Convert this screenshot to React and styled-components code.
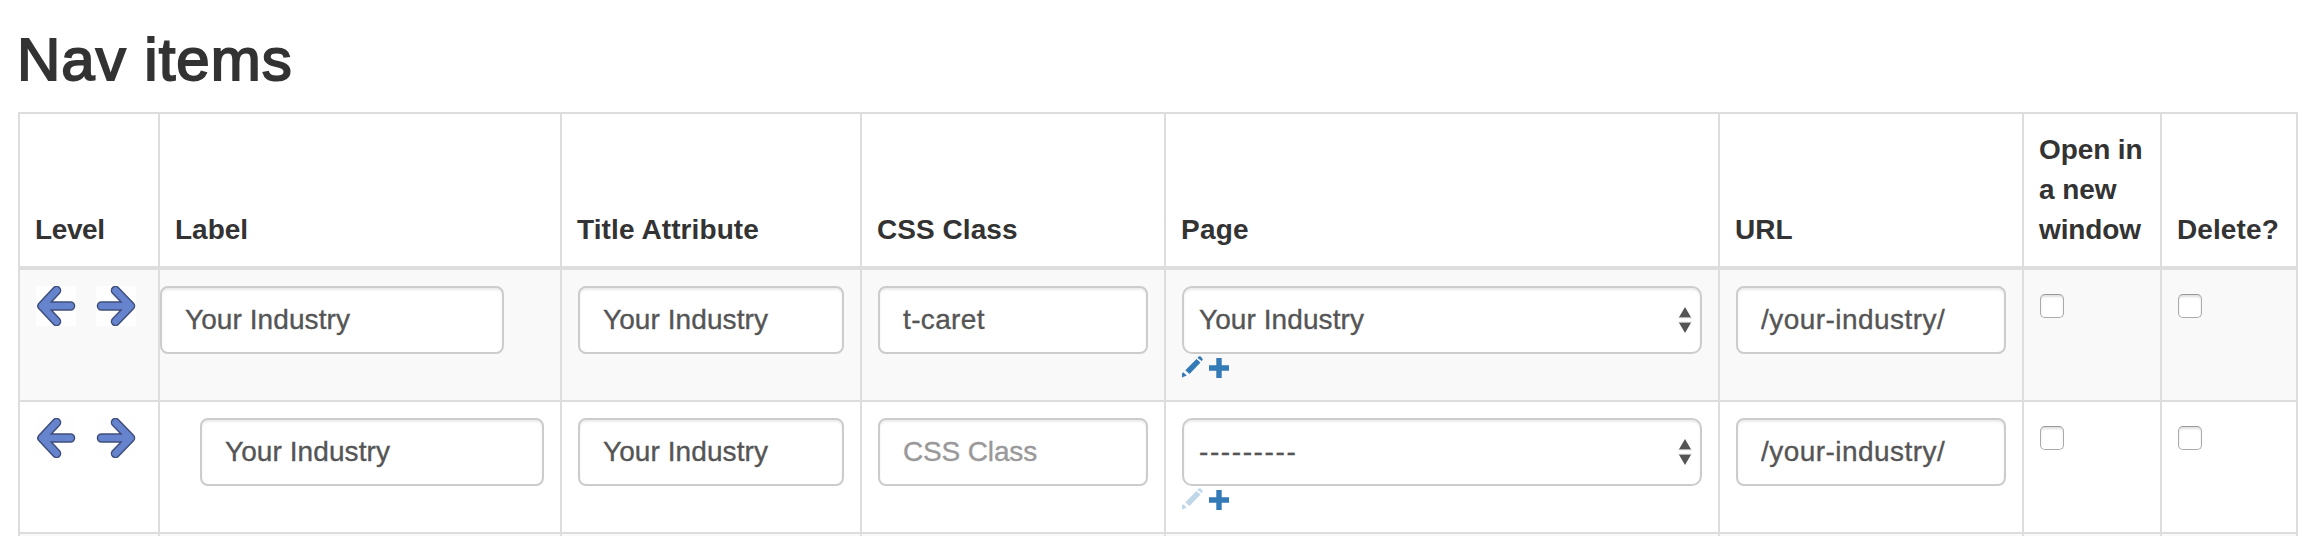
import React from "react";
import styled, { createGlobalStyle } from "styled-components";

const GlobalStyle = createGlobalStyle`
  * { box-sizing: border-box; }
  body {
    margin: 0;
    background: #fff;
    color: #333;
    font: 28px/40px "Liberation Sans", Arial, sans-serif;
    overflow: hidden;
  }
`;

const Page = styled.main`
  width: 2312px;
  height: 536px;
  padding: 27px 14px 0 18px;
  overflow: hidden;
`;

const Title = styled.h1`
  margin: 0 0 19px;
  font-size: 60px;
  line-height: 66px;
  font-weight: 400;
  letter-spacing: 1px;
  text-indent: -1px;
  -webkit-text-stroke: 1.9px #333;
`;

const Table = styled.table`
  width: 2280px;
  table-layout: fixed;
  border-collapse: separate;
  border-spacing: 0;
  border: solid #ddd;
  border-width: 2px 0 0 2px;
`;

const Col = styled.col`
  width: ${(p) => p.$w}px;
`;

const HeadCell = styled.th`
  padding: 16px 16px 16px 15px;
  border: solid #ddd;
  border-width: 0 2px 4px 0;
  text-align: left;
  vertical-align: bottom;
  font-weight: 700;
  white-space: nowrap;
  letter-spacing: ${(p) => p.$spacing || 0}px;
`;

const Row = styled.tr`
  background: ${(p) => (p.$striped ? "#f9f9f9" : "#fff")};
`;

const Cell = styled.td`
  height: 132px;
  padding: 16px;
  padding-left: ${(p) => p.$indent ?? 16}px;
  border: solid #ddd;
  border-width: 0 2px 2px 0;
  vertical-align: top;
`;

const TextInput = styled.input`
  display: block;
  width: ${(p) => p.$w}px;
  height: 68px;
  padding: 12px 23px;
  border: 2px solid #ccc;
  border-radius: 8px;
  background: #fff;
  box-shadow: inset 0 2px 2px rgba(0, 0, 0, 0.075);
  color: #555;
  font: inherit;
  letter-spacing: ${(p) => p.$spacing || 0}px;
  -webkit-text-stroke: 0.35px currentColor;
  outline: none;
  &::placeholder { color: #999; opacity: 1; }
`;

const SelectBox = styled.div`
  display: flex;
  align-items: center;
  justify-content: space-between;
  width: 520px;
  height: 68px;
  padding: 0 8px 0 15px;
  border: 2px solid #ccc;
  border-radius: 10px;
  background: #fff;
  box-shadow: inset 0 2px 2px rgba(0, 0, 0, 0.075);
  color: #555;
  -webkit-text-stroke: 0.35px currentColor;
`;

const SelectValue = styled.span`
  letter-spacing: ${(p) => p.$spacing || 0}px;
`;

const Arrows = styled.div`
  display: flex;
  gap: 20px;
  svg { display: block; background: #fefefe; }
`;

const Links = styled.div`
  display: flex;
  gap: 6px;
  padding-top: 2px;
  svg { display: block; }
`;

const Check = styled.input`
  appearance: none;
  display: block;
  width: 24px;
  height: 24px;
  margin: 8px 0 0;
  border: 1px solid #aaa;
  border-top-color: #999;
  border-radius: 5px;
  background: #fff;
  box-shadow: inset 0 2px 2px rgba(0, 0, 0, 0.12);
`;

function ArrowIcon({ right }) {
  const d = right
    ? "M5.5 20H32M19.5 4.5L34.5 20L19.5 35.5"
    : "M34.5 20H8M20.5 4.5L6 20L20.5 35.5";
  return (
    <svg width="40" height="40" viewBox="0 0 40 40" fill="none" strokeLinecap="round" strokeLinejoin="round">
      <path d={d} stroke="#3f4f7c" strokeWidth="9.6" />
      <path d={d} stroke="#6683cd" strokeWidth="6.6" />
    </svg>
  );
}

function Stepper() {
  return (
    <svg width="14" height="28" viewBox="0 0 14 28">
      <path d="M7 1L13 11.3H1zM1 16.7H13L7 27z" fill="#555" />
      <path d="M.5 11.7H13.5M.5 16.3H13.5" stroke="#555" strokeOpacity=".45" strokeWidth=".7" />
    </svg>
  );
}

function Pencil({ disabled }) {
  return (
    <svg width="21" height="22" viewBox="0 0 21 22" fill="#337ab7" opacity={disabled ? 0.3 : 1}>
      <path d="M16.2 1L17.2 .3Q18 0 18.7 .6L20.4 2.4Q21 3.2 20.5 4L19.6 5.1L15.5 1.9zM14.5 2.9L18.5 6.4L7.5 18L3.3 14.3zM1.2 16.2L4.7 19.6L0 21.6V17.5z" />
    </svg>
  );
}

function Plus() {
  return (
    <svg width="20" height="22" viewBox="0 0 20 22" fill="#337ab7">
      <path d="M7.3 2H12.7V9.3H20V14.7H12.7V22H7.3V14.7H0V9.3H7.3z" />
    </svg>
  );
}

const widths = [140, 402, 300, 304, 554, 304, 138, 136];

const headings = [
  { text: "Level", spacing: -0.4 },
  { text: "Label" },
  { text: "Title Attribute", spacing: 0.1 },
  { text: "CSS Class", spacing: 0.05 },
  { text: "Page", spacing: 0.2 },
  { text: "URL" },
  { text: <>Open in<br />a new<br />window</>, spacing: -0.1 },
  { text: "Delete?", spacing: 0.1 },
];

const items = [
  { indent: 0, css: "t-caret", page: "Your Industry" },
  { indent: 40, css: "", page: "" },
];

function ItemRow({ item, striped }) {
  return (
    <Row $striped={striped}>
      <Cell>
        <Arrows><ArrowIcon /><ArrowIcon right /></Arrows>
      </Cell>
      <Cell $indent={item.indent}>
        <TextInput $w={344} $spacing={0.08} defaultValue="Your Industry" />
      </Cell>
      <Cell><TextInput $w={266} $spacing={0.08} defaultValue="Your Industry" /></Cell>
      <Cell>
        <TextInput
          $w={270}
          $spacing={item.css ? 0.35 : -0.15}
          defaultValue={item.css}
          placeholder="CSS Class"
        />
      </Cell>
      <Cell>
        <SelectBox>
          <SelectValue $spacing={item.page ? 0.08 : 1.6}>{item.page || "---------"}</SelectValue>
          <Stepper />
        </SelectBox>
        <Links><Pencil disabled={!item.page} /><Plus /></Links>
      </Cell>
      <Cell><TextInput $w={270} $spacing={0.45} defaultValue="/your-industry/" /></Cell>
      <Cell><Check type="checkbox" /></Cell>
      <Cell><Check type="checkbox" /></Cell>
    </Row>
  );
}

export default function App() {
  return (
    <>
      <GlobalStyle />
      <Page>
        <Title>Nav items</Title>
        <Table>
          <colgroup>{widths.map((w, i) => <Col key={i} $w={w} />)}</colgroup>
          <thead>
            <tr>
              {headings.map((h, i) => (
                <HeadCell key={i} $spacing={h.spacing}>{h.text}</HeadCell>
              ))}
            </tr>
          </thead>
          <tbody>
            {items.map((item, i) => <ItemRow key={i} item={item} striped={i % 2 === 0} />)}
            <Row $striped>
              {widths.map((w, i) => <Cell key={i} />)}
            </Row>
          </tbody>
        </Table>
      </Page>
    </>
  );
}
